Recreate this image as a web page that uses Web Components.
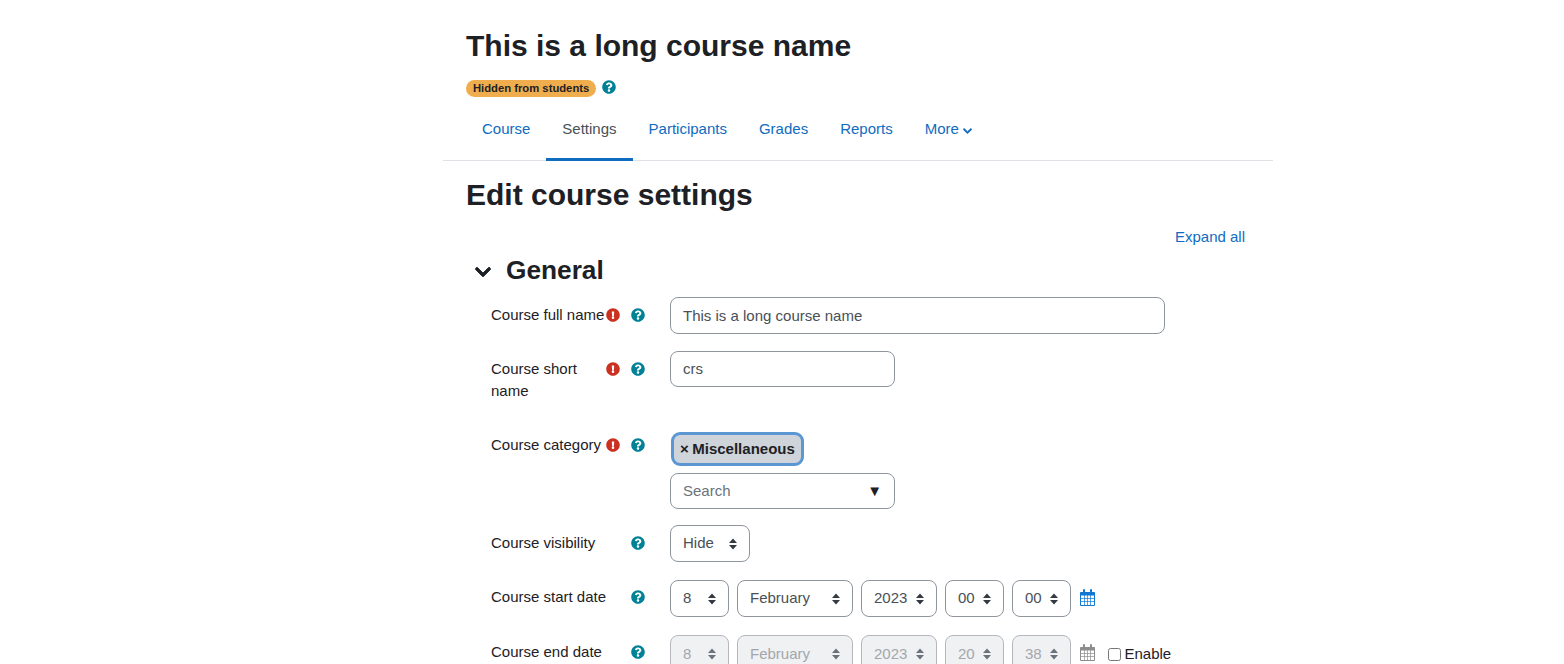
<!DOCTYPE html>
<html lang="en">
<head>
<meta charset="utf-8">
<title>Edit course settings</title>
<style>
  html, body { margin: 0; height: 664px; overflow: hidden; background: #fff; }
  body { font: 15px/22.5px "Liberation Sans", Arial, sans-serif; color: #1d2125; }
  course-page { width: 830px; margin-left: 443px; }
  .enable { display: flex; align-items: center; gap: 3.5px; margin: 2px 0 0 4px; }
  .enable input { margin: 0; width: 13px; height: 13px; }
</style>
</head>
<body>
<course-page>
  <span slot="title">This is a long course name</span>
  <span slot="badge">Hidden from students</span>
  <course-tab>Course</course-tab>
  <course-tab active>Settings</course-tab>
  <course-tab>Participants</course-tab>
  <course-tab>Grades</course-tab>
  <course-tab>Reports</course-tab>
  <course-tab more>More</course-tab>
  <span slot="heading">Edit course settings</span>

  <form-section title="General" slot="form">
    <form-row label="Course full name" required gap="17">
      <text-box tall style="width:495px">This is a long course name</text-box>
    </form-row>
    <form-row label="Course short name" required gap="26">
      <text-box style="width:225px">crs</text-box>
    </form-row>
    <form-row label="Course category" required raised gap="16">
      <div class="stack">
        <cat-chip>Miscellaneous</cat-chip>
        <text-box style="width:225px" placeholder arrow>Search</text-box>
      </div>
    </form-row>
    <form-row label="Course visibility" gap="18">
      <select-box style="width:80px">Hide</select-box>
    </form-row>
    <form-row label="Course start date" raised gap="18">
      <div class="line">
        <select-box style="width:59px">8</select-box>
        <select-box style="width:116px">February</select-box>
        <select-box style="width:76px">2023</select-box>
        <select-box style="width:59px">00</select-box>
        <select-box style="width:59px">00</select-box>
        <cal-icon></cal-icon>
      </div>
    </form-row>
    <form-row label="Course end date" raised gap="16">
      <div class="line">
        <select-box disabled style="width:59px">8</select-box>
        <select-box disabled style="width:116px">February</select-box>
        <select-box disabled style="width:76px">2023</select-box>
        <select-box disabled style="width:59px">20</select-box>
        <select-box disabled style="width:59px">38</select-box>
        <cal-icon disabled></cal-icon>
        <label class="enable"><input type="checkbox">Enable</label>
      </div>
    </form-row>
  </form-section>
</course-page>

<script>
const QUESTION = 'M504 256c0 136.997-111.043 248-248 248S8 392.997 8 256C8 119.083 119.043 8 256 8s248 111.083 248 248zM262.655 90c-54.497 0-89.255 22.957-116.549 63.758-3.536 5.286-2.353 12.415 2.715 16.258l34.699 26.31c5.205 3.947 12.621 3.008 16.665-2.122 17.864-22.658 30.113-35.797 57.303-35.797 20.429 0 45.698 13.148 45.698 32.958 0 14.976-12.363 22.667-32.534 33.976C247.128 238.528 216 254.941 216 296v4c0 6.627 5.373 12 12 12h56c6.627 0 12-5.373 12-12v-1.333c0-28.462 83.186-29.647 83.186-106.667 0-58.002-60.165-102-116.531-102zM256 338c-25.365 0-46 20.635-46 46 0 25.364 20.635 46 46 46s46-20.636 46-46c0-25.365-20.635-46-46-46z';
const EXCLAIM = 'M504 256c0 136.997-111.043 248-248 248S8 392.997 8 256C8 119.083 119.043 8 256 8s248 111.083 248 248zm-248 50c-25.405 0-46 20.595-46 46s20.595 46 46 46 46-20.595 46-46-20.595-46-46-46zm-43.673-165.346l7.418 136c.347 6.364 5.609 11.346 11.982 11.346h48.546c6.373 0 11.635-4.982 11.982-11.346l7.418-136c.375-6.874-5.098-12.654-11.982-12.654h-63.383c-6.884 0-12.356 5.78-11.981 12.654z';
const CHEVRON = 'M207.029 381.476L12.686 187.132c-9.373-9.373-9.373-24.569 0-33.941l22.667-22.667c9.357-9.357 24.522-9.375 33.901-.04L224 284.505l154.745-154.021c9.379-9.335 24.544-9.317 33.901.04l22.667 22.667c9.373 9.373 9.373 24.569 0 33.941L240.971 381.476c-9.373 9.372-24.569 9.372-33.942 0z';

const circleIcon = (d, color) =>
  `<svg viewBox="0 0 512 512" width="14" height="14" fill="${color}" style="display:block"><path d="${d}"/></svg>`;

class CoursePage extends HTMLElement {
  connectedCallback() {
    this.attachShadow({ mode: 'open' }).innerHTML = `
      <style>
        :host { display: block; }
        header { padding: 0 23px; }
        h1, h2 { margin: 0; font-size: 30px; line-height: 33.75px; font-weight: 700; }
        h1 { padding-top: 29px; }
        .status { display: flex; align-items: center; gap: 6px; margin-top: 17px; height: 17px; }
        .status svg { margin-top: -2px; }
        .badge { background: #f0ad4e; border-radius: 9px; padding: 0 7px; font-size: 11.25px; line-height: 17px; font-weight: 700; }
        nav { display: flex; height: 60px; margin-top: 3px; padding-left: 23px; border-bottom: 1px solid #dee2e6; }
        h2 { padding: 17px 23px 0; }
      </style>
      <header>
        <h1><slot name="title"></slot></h1>
        <div class="status"><span class="badge"><slot name="badge"></slot></span>${circleIcon(QUESTION, '#008196')}</div>
      </header>
      <nav><slot></slot></nav>
      <h2><slot name="heading"></slot></h2>
      <slot name="form"></slot>`;
  }
}

class CourseTab extends HTMLElement {
  connectedCallback() {
    const more = this.hasAttribute('more');
    this.attachShadow({ mode: 'open' }).innerHTML = `
      <style>
        :host { display: flex; align-items: center; padding: 0 16px 1px; height: 60px; box-sizing: border-box; color: #0f6cbf; gap: 4px; cursor: pointer; }
        :host([active]) { color: #495057; border-bottom: 3px solid #0f6cbf; padding-bottom: 0; margin-bottom: -1px; height: 61px; }
        svg { width: 9px; height: 10px; fill: currentColor; margin-top: 3px; stroke: currentColor; stroke-width: 24; }
      </style>
      <slot></slot>${more ? `<svg viewBox="0 0 448 512"><path d="${CHEVRON}"/></svg>` : ''}`;
  }
}

class FormSection extends HTMLElement {
  connectedCallback() {
    const title = this.getAttribute('title');
    this.removeAttribute('title');
    this.attachShadow({ mode: 'open' }).innerHTML = `
      <style>
        :host { display: block; padding: 0 23px; }
        .expand { text-align: right; color: #0f6cbf; padding-right: 5px; margin-top: 14px; }
        .head { display: flex; align-items: center; height: 33px; margin-top: 6px; margin-bottom: 10px; }
        svg { width: 16px; height: 18px; margin: 3px 15px 0 9px; fill: #1d2125; stroke: #1d2125; stroke-width: 24; }
        h3 { margin: 0; font-size: 26.25px; line-height: 33px; font-weight: 700; }
      </style>
      <div class="expand">Expand all</div>
      <div class="head">
        <svg viewBox="0 0 448 512"><path d="${CHEVRON}"/></svg>
        <h3>${title}</h3>
      </div>
      <slot></slot>`;
  }
}

class FormRow extends HTMLElement {
  connectedCallback() {
    const req = this.hasAttribute('required');
    // rows in the original sit on fractional offsets, "raised" rows round up by a pixel
    const up = this.hasAttribute('raised') ? 1 : 0;
    this.attachShadow({ mode: 'open' }).innerHTML = `
      <style>
        :host { display: grid; grid-template-columns: 115px 25px 39px 1fr; padding-left: 25px; margin-bottom: ${this.getAttribute('gap') || 16}px; }
        .label { padding-top: ${7 - up}px; margin-right: -2px; line-height: 22px; }
        .ic { padding-top: ${11 - up}px; }
        ::slotted(.stack) { display: flex; flex-direction: column; gap: 7px; align-items: flex-start; }
        ::slotted(.line) { display: flex; gap: 8px; align-items: center; }
      </style>
      <div class="label">${this.getAttribute('label')}</div>
      <div class="ic">${req ? circleIcon(EXCLAIM, '#ca3120') : ''}</div>
      <div class="ic">${circleIcon(QUESTION, '#008196')}</div>
      <div class="field"><slot></slot></div>`;
  }
}

class TextBox extends HTMLElement {
  connectedCallback() {
    this.attachShadow({ mode: 'open' }).innerHTML = `
      <style>
        :host { display: flex; align-items: center; justify-content: space-between; box-sizing: border-box; height: 36px; padding: 0 12px; border: 1px solid #8f959e; border-radius: 8px; color: #495057; background: #fff; }
        :host([tall]) { height: 37px; padding-top: 1px; }
        :host([placeholder]) { color: #6a737b; }
        span { color: #1d2125; font-size: 15px; }
      </style>
      <slot></slot>${this.hasAttribute('arrow') ? '<span>▼</span>' : ''}`;
  }
}

class SelectBox extends HTMLElement {
  connectedCallback() {
    this.attachShadow({ mode: 'open' }).innerHTML = `
      <style>
        :host { display: flex; align-items: center; justify-content: space-between; box-sizing: border-box; height: 37px; padding: 0 12px; border: 1px solid #8f959e; border-radius: 8px; color: #495057; background: #fff; }
        :host([disabled]) { background: #f0f1f3; color: #a3a7ac; border-color: #b4b7bc; padding-top: 1px; }
        svg { width: 8px; height: 12px; fill: #343a40; flex: none; }
        :host([disabled]) svg { fill: #6a737b; }
      </style>
      <slot></slot><svg viewBox="0 0 8 12"><path d="M4 0.5 8 5H0zM0 7h8l-4 4.5z"/></svg>`;
  }
}

class CatChip extends HTMLElement {
  connectedCallback() {
    this.attachShadow({ mode: 'open' }).innerHTML = `
      <style>
        :host { display: inline-flex; align-items: center; gap: 3.5px; box-sizing: border-box; height: 34px; margin: 4px 0 0 1px; padding: 0 6px; background: #ced4da; border: 3px solid #5a97d3; border-radius: 9px; font-weight: 700; }
      </style>
      <span>×</span><slot></slot>`;
  }
}

class CalIcon extends HTMLElement {
  connectedCallback() {
    const c = this.hasAttribute('disabled') ? '#8f8d8c' : '#1177d1';
    this.attachShadow({ mode: 'open' }).innerHTML = `
      <style>:host { display: block; width: 16px; height: 17px; margin: -2px 0 0 1px; } svg { display: block; }</style>
      <svg viewBox="0 0 16 17" width="16" height="17" fill="none" stroke="${c}">
        <path d="M.5 3.500h14v13H.5z"/>
        <path d="M.5 5h14" stroke-width="3"/>
        <path d="M.5 9.500h14M.5 12.500h14M4.500 6v10M7.500 6v10M10.500 6v10" stroke-opacity=".7"/>
        <path d="M4 1v4M11 1v4" stroke-width="2" stroke-linecap="round"/>
      </svg>`;
  }
}

customElements.define('course-page', CoursePage);
customElements.define('course-tab', CourseTab);
customElements.define('form-section', FormSection);
customElements.define('form-row', FormRow);
customElements.define('text-box', TextBox);
customElements.define('select-box', SelectBox);
customElements.define('cat-chip', CatChip);
customElements.define('cal-icon', CalIcon);
</script>
</body>
</html>
